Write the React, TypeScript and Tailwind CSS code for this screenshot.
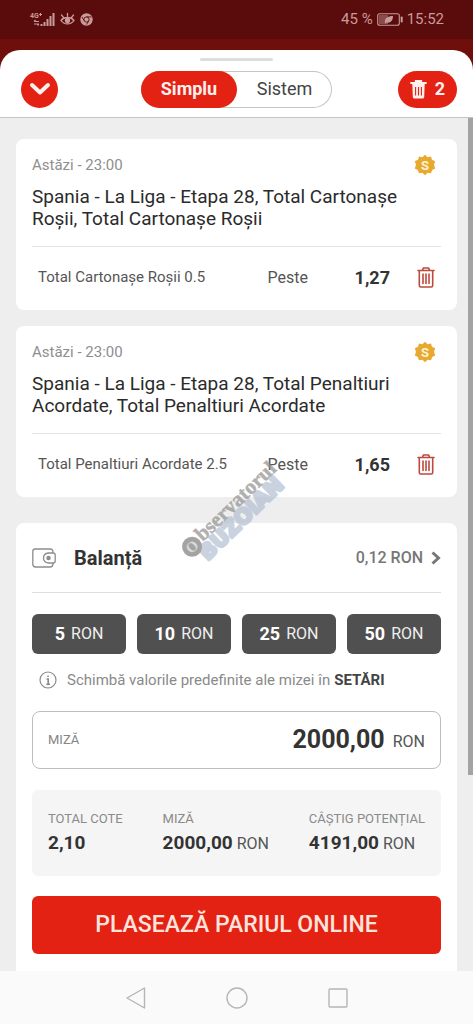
import React, { useState } from 'react';

interface Bet {
  id: string;
  time: string;
  title: string;
  market: string;
  pick: string;
  odds: string;
}

const bets: Bet[] = [
  {
    id: 'cards',
    time: 'Astăzi - 23:00',
    title: 'Spania - La Liga - Etapa 28, Total Cartonașe Roșii, Total Cartonașe Roșii',
    market: 'Total Cartonașe Roșii 0.5',
    pick: 'Peste',
    odds: '1,27',
  },
  {
    id: 'penalties',
    time: 'Astăzi - 23:00',
    title: 'Spania - La Liga - Etapa 28, Total Penaltiuri Acordate, Total Penaltiuri Acordate',
    market: 'Total Penaltiuri Acordate 2.5',
    pick: 'Peste',
    odds: '1,65',
  },
];

const presets = ['5', '10', '25', '50'];

const totals = [
  { label: 'TOTAL COTE', value: '2,10', unit: '' },
  { label: 'MIZĂ', value: '2000,00', unit: 'RON' },
  { label: 'CÂȘTIG POTENȚIAL', value: '4191,00', unit: 'RON' },
];

const StatusBar = () => (
  <div className="flex h-[39px] items-center justify-between bg-[#5a0c0c] pr-[29px] pl-[30px] text-[#c99a9a]">
    <div className="flex items-center gap-1">
      <svg width="26" height="16" viewBox="0 0 26 16" fill="currentColor" aria-hidden="true">
        <text x="0" y="6" fontSize="7" fontWeight="700">4G</text>
        <path d="M10.5 1v3M9 2.5h3" stroke="currentColor" strokeWidth="1" />
        <path d="M4 9.500h5M4 9.500l1.500-1.500M9 12H4M9 12l-1.500 1.500" stroke="currentColor" strokeWidth="1.200" fill="none" />
        <path d="M10.500 12h2v2h-2zM13.500 10h2v4h-2zM16.500 7h2v7h-2zM19.500 4h2v10h-2zM22.500 1h2v13h-2z" />
      </svg>
      <svg width="15" height="15" viewBox="0 0 15 15" fill="none" stroke="currentColor" strokeWidth="1.300" strokeLinecap="round" aria-hidden="true">
        <path d="M1 8.500C4 4.500 11 4.500 14 8.500C11 13 4 13 1 8.500ZM7.500 4.500V1.500M3.500 5.500L1.500 3M11.500 5.500L13.500 3" />
        <circle cx="7.500" cy="8.500" r="2" fill="currentColor" />
      </svg>
      <svg className="ml-px" width="13" height="13" viewBox="0 0 13 13" aria-hidden="true">
        <circle cx="6.500" cy="6.500" r="6.200" fill="currentColor" />
        <g fill="none" stroke="#5a0c0c" strokeWidth="0.900">
          <circle cx="6.500" cy="6.500" r="2.600" />
          <path d="M6.500 3.900H11.500M4.200 7.700L2 4M8.800 7.700L6.600 11.500" />
        </g>
      </svg>
    </div>
    <div className="flex items-center gap-1 text-[15px]">
      <span>45 %</span>
      <svg width="26" height="13" viewBox="0 0 26 13" aria-hidden="true">
        <rect x="0.700" y="0.700" width="21.600" height="11.600" rx="2" fill="none" stroke="currentColor" strokeWidth="1.100" />
        <rect x="2" y="2" width="9" height="9" fill="currentColor" opacity="0.450" />
        <path d="M8 10C7 5 11 3 16 3C16 8 13 10.500 9 9.500L8 11Z" fill="currentColor" />
        <rect x="23.700" y="3.500" width="2" height="6" rx="0.800" fill="currentColor" />
      </svg>
      <span>15:52</span>
    </div>
  </div>
);

const TrashOutline = () => (
  <svg width="18" height="21" viewBox="0 0 18 21" fill="none" stroke="#bd4a3c" strokeWidth="1.600" strokeLinecap="round" strokeLinejoin="round" aria-hidden="true">
    <path d="M1 3.500H17M5.500 3.200L6.300 1H11.700L12.500 3.200M2.300 3.800V18.500Q2.300 20 3.800 20H14.200Q15.700 20 15.700 18.500V3.800M6 7V16.500M9 7V16.500M12 7V16.500" />
  </svg>
);

const TrashSolid = () => (
  <svg width="17" height="19" viewBox="0 0 17 19" aria-hidden="true">
    <path d="M5.800 2.200V1H11.200V2.200M1 3H16" fill="none" stroke="#fff0ed" strokeWidth="1.900" strokeLinecap="round" />
    <path d="M2.300 4H14.700L14.200 17Q14.100 18.500 12.600 18.500H4.400Q2.900 18.500 2.800 17Z" fill="#fff0ed" />
    <path d="M5.600 7V15.500M8.500 7V15.500M11.400 7V15.500" stroke="#e32213" strokeWidth="1.100" />
  </svg>
);

const SuperBadge = () => (
  <svg width="22" height="22" viewBox="0 0 22 22" aria-label="Superbet" role="img">
    <path
      d="M11 0.800L13.600 3.200L17 2.500L18 5.800L21.200 7.200L20 10.800L21.200 14.500L18.200 15.900L17 19.200L13.600 18.800L11 21.200L8.400 18.800L5 19.200L3.800 15.900L0.800 14.500L2 10.800L0.800 7.200L4 5.800L5 2.500L8.400 3.200Z"
      fill="#e8a92f"
    />
    <text x="11" y="15.500" textAnchor="middle" fontSize="13" fontWeight="700" fill="#fdf3d4">S</text>
  </svg>
);

const WalletIcon = () => (
  <svg width="24" height="20" viewBox="0 0 24 20" fill="none" stroke="#8d8d8d" strokeWidth="1.300" strokeLinejoin="round" aria-hidden="true">
    <path d="M21 5V4Q21 1 18 1H3Q0.800 1 0.800 3.500V16Q0.800 19 3.500 19H18Q21 19 21 16V15" />
    <path d="M21 5H16.500Q11.500 5.500 11.500 10Q11.500 14.500 16.500 15H21Q23.200 15 23.200 13V7Q23.200 5 21 5Z" />
    <circle cx="16.500" cy="10" r="1.600" fill="#8d8d8d" />
  </svg>
);

const BetCard = ({ bet }: { bet: Bet }) => (
  <article className="rounded-lg bg-white px-4 pt-4">
    <div className="flex h-5 items-center justify-between pr-[5px]">
      <span className="text-[15px] text-[#8e8e8e]">{bet.time}</span>
      <SuperBadge />
    </div>
    <h2 className="mt-[11px] pb-4 text-[19px] leading-[22px] text-[#2b2b2b]">{bet.title}</h2>
    <div className="flex h-16 items-center border-t border-[#e2e2e2] px-[6px] pb-[2px] text-[#555555]">
      <span className="flex-1 text-[15px]">{bet.market}</span>
      <span className="w-[87px] text-base">{bet.pick}</span>
      <span className="mr-[27px] text-lg font-bold text-[#333333]">{bet.odds}</span>
      <button type="button" aria-label="Șterge selecția">
        <TrashOutline />
      </button>
    </div>
  </article>
);

const Watermark = () => (
  <svg
    className="pointer-events-none absolute bottom-[398px] left-[174px]"
    width="120"
    height="120"
    viewBox="0 0 120 120"
    aria-hidden="true"
  >
    <g transform="translate(18 98) rotate(-44)" fontWeight="700">
      <text x="4" y="18" fontFamily="DejaVu Sans, sans-serif" fontSize="21" fill="#b3bfd1" stroke="#b3bfd1" strokeWidth="3" strokeLinejoin="round" opacity="0.700">BUZOIAN</text>
      <circle cx="3" cy="-3" r="10" fill="#a3a3a3" />
      <text x="3" y="2" textAnchor="middle" fontFamily="Liberation Serif, serif" fontSize="15" fill="#d8d8d8">O</text>
      <text x="14" y="1" fontFamily="Liberation Serif, serif" fontSize="21" fill="#8f8f8f" stroke="#8f8f8f" strokeWidth="0.500" opacity="0.700">bservatorul</text>
    </g>
  </svg>
);

const App: React.FC = () => {
  const [mode, setMode] = useState('Simplu');
  const [stake, setStake] = useState('2000,00');

  return (
    <div className="flex min-h-screen flex-col bg-[#eeeeee] font-['Roboto','Noto_Sans',sans-serif]">
      <StatusBar />

      {/* Slip header */}
      <div className="bg-[#6f0f0b] pt-[11px]">
        <header className="rounded-t-[20px] border-b border-[#c4c4c4] bg-white pt-2">
          <div className="mx-auto h-[3px] w-[73px] rounded-full bg-[#dddddd]" />
          <div className="grid h-14 grid-cols-[1fr_auto_1fr] items-center px-4">
            <button type="button" aria-label="Închide" className="ml-[5px] flex size-[37px] items-center justify-center rounded-full bg-[#e32213]">
              <svg width="22" height="14" viewBox="0 0 22 14" fill="none" stroke="#fff0ed" strokeWidth="4" strokeLinecap="round" strokeLinejoin="round" aria-hidden="true">
                <path d="M3 3L11 10.500L19 3" />
              </svg>
            </button>
            <div className="flex h-[37px] rounded-full shadow-[inset_0_0_0_1px_#c4c4c4]">
              {['Simplu', 'Sistem'].map((m) => (
                <button
                  key={m}
                  type="button"
                  onClick={() => setMode(m)}
                  className={
                    m === mode
                      ? 'w-24 rounded-full bg-[#e32213] text-lg font-bold text-[#fff0ed]'
                      : 'w-[95px] rounded-full text-lg text-[#444444]'
                  }
                >
                  {m}
                </button>
              ))}
            </div>
            <button type="button" aria-label="Șterge toate" className="flex h-[37px] w-[59px] items-center justify-center gap-2 justify-self-end rounded-full bg-[#e32213] text-lg font-bold text-[#fff0ed]">
              <TrashSolid />
              <span>2</span>
            </button>
          </div>
        </header>
      </div>

      <div className="flex flex-1">
        <main className="relative flex min-w-0 flex-1 flex-col pt-[21px] pr-[11px] pl-4">
          <div className="flex flex-col gap-4">
            {bets.map((bet) => (
              <BetCard key={bet.id} bet={bet} />
            ))}
          </div>

          <section className="mt-[26px] flex-1 rounded-t-lg bg-white px-4 pb-4">
            <div className="flex h-[70px] items-center border-b border-[#dedede]">
              <WalletIcon />
              <h2 className="ml-[18px] flex-1 text-xl font-bold text-[#333333]">Balanță</h2>
              <a href="#balanta" className="flex items-center gap-2 text-base font-medium text-[#777777]">
                0,12 RON
                <svg width="10" height="14" viewBox="0 0 10 14" fill="none" stroke="#777777" strokeWidth="3" aria-hidden="true">
                  <path d="M1.500 1.500L7.500 7L1.500 12.500" />
                </svg>
              </a>
            </div>

            <div className="mt-[21px] grid grid-cols-4 gap-[11px]">
              {presets.map((p) => (
                <button
                  key={p}
                  type="button"
                  onClick={() => setStake(`${p},00`)}
                  className="flex h-10 items-center justify-center gap-[6px] rounded-md bg-[#505050] text-base text-[#eeeeee]"
                >
                  <b className="text-lg text-white">{p}</b> RON
                </button>
              ))}
            </div>

            <p className="mt-4 flex h-5 items-center pl-[7px] text-[15px] whitespace-nowrap text-[#8a8a8a]">
              <svg className="mr-[10px] shrink-0" width="18" height="18" viewBox="0 0 18 18" fill="none" stroke="#8a8a8a" strokeWidth="1.200" aria-hidden="true">
                <circle cx="9" cy="9" r="8" />
                <path d="M7.500 8H9.200V13M7.300 13.200H11M9 4.500V6" strokeWidth="1.600" />
              </svg>
              <span>Schimbă valorile predefinite ale mizei în</span>
              <a href="#setari" className="ml-1 font-bold text-[#444444]">SETĂRI</a>
            </p>

            <div className="mt-[21px] flex h-[58px] items-center rounded-lg border border-[#bdbdbd] px-[15px]">
              <label htmlFor="stake" className="text-[13px] text-[#858585]">MIZĂ</label>
              <input
                id="stake"
                value={stake}
                onChange={(e) => setStake(e.target.value)}
                className="w-0 min-w-0 flex-1 bg-transparent text-right text-[25px] font-bold text-[#333333] outline-none"
              />
              <span className="pt-1 pl-2 text-base text-[#555555]">RON</span>
            </div>

            <dl className="mt-[21px] flex h-[86px] items-center justify-between rounded-md bg-[#f5f5f5] px-4 pb-1">
              {totals.map((t) => (
                <div key={t.label}>
                  <dt className="text-[13px] leading-6 text-[#8a8a8a]">{t.label}</dt>
                  <dd className="text-base leading-6 text-[#555555]">
                    <b className="text-[19px] leading-6 text-[#333333]">{t.value}</b> {t.unit}
                  </dd>
                </div>
              ))}
            </dl>

            <button type="button" className="mt-5 h-[58px] w-full rounded-md bg-[#e32213] text-[23px] font-medium text-[#ffe3dd]">
              PLASEAZĂ PARIUL ONLINE
            </button>
          </section>

          <Watermark />
        </main>
        <div className="w-[5px] shrink-0">
          <div className="h-[77%] bg-[#a3a3a3]" />
        </div>
      </div>

      {/* Android navigation */}
      <nav className="flex h-[53px] items-center justify-center gap-20 bg-[#fafafa]">
        <button type="button" aria-label="Înapoi">
          <svg width="20" height="22" viewBox="0 0 20 22" fill="none" stroke="#b5b5b5" strokeWidth="1.400" strokeLinejoin="round">
            <path d="M18.500 1V21L1 11Z" />
          </svg>
        </button>
        <button type="button" aria-label="Acasă">
          <svg width="22" height="22" viewBox="0 0 22 22" fill="none" stroke="#b5b5b5" strokeWidth="1.400">
            <circle cx="11" cy="11" r="10" />
          </svg>
        </button>
        <button type="button" aria-label="Recente">
          <svg width="20" height="20" viewBox="0 0 20 20" fill="none" stroke="#b5b5b5" strokeWidth="1.400">
            <rect x="1" y="1" width="18" height="18" rx="1" />
          </svg>
        </button>
      </nav>
    </div>
  );
};

export default App;
